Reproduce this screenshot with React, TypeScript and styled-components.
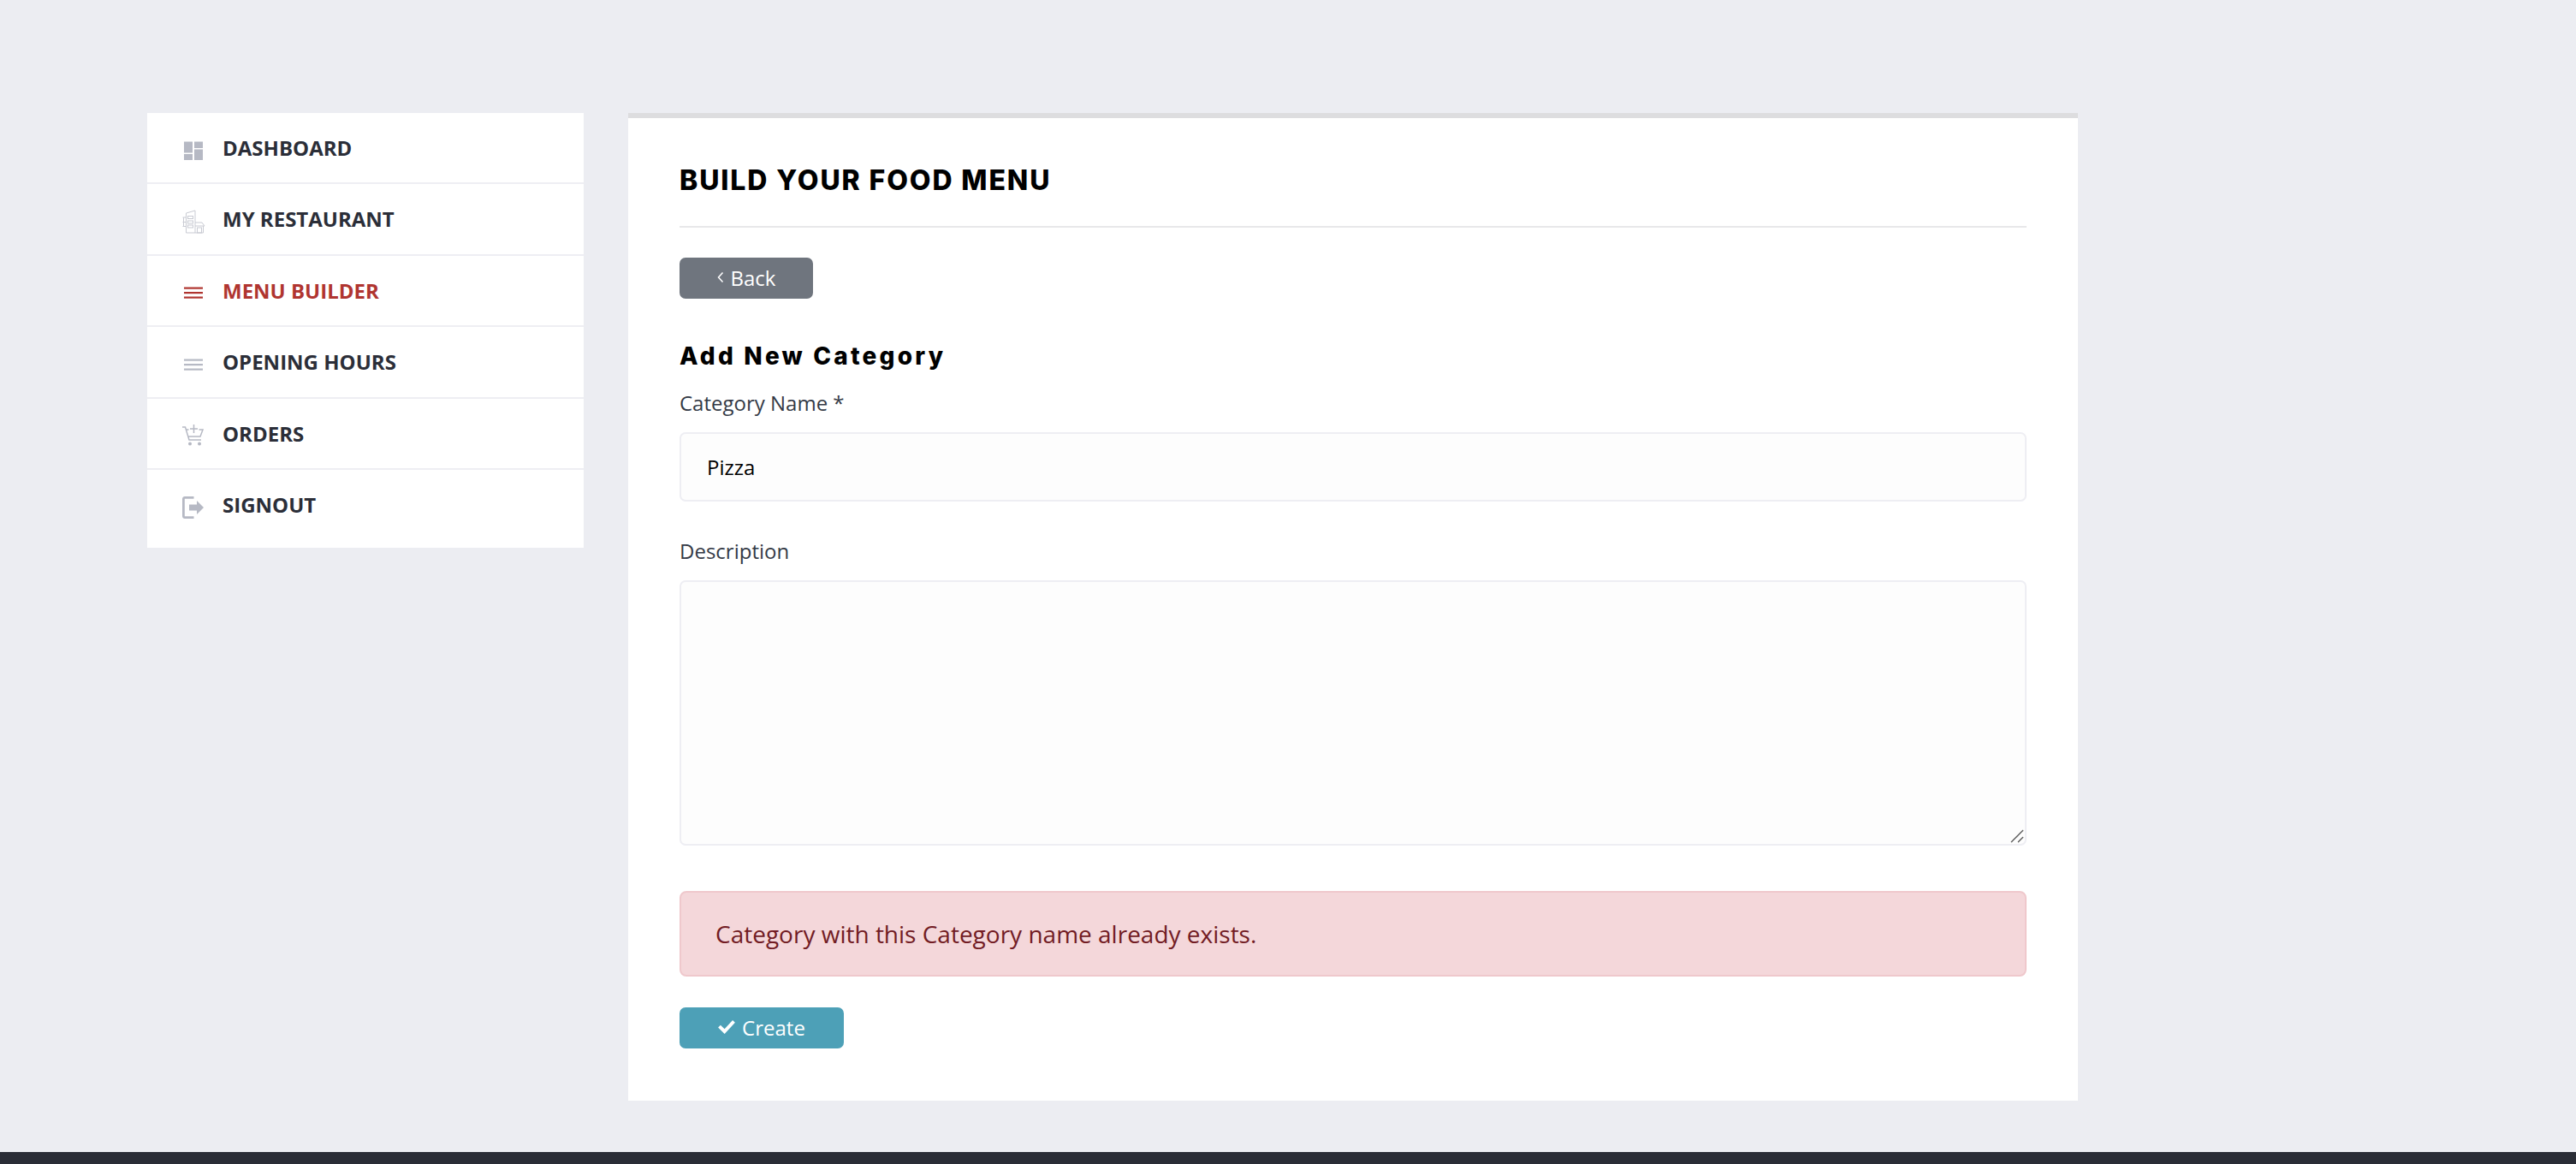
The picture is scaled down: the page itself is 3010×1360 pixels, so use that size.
import { FC, ReactNode } from "react";
import styled, { createGlobalStyle } from "styled-components";

const GlobalStyle = createGlobalStyle`
  html, body {
    margin: 0;
    padding: 0;
    background: #ecedf2;
  }
  * {
    box-sizing: border-box;
  }
`;

const Page = styled.div`
  width: 3010px;
  height: 1360px;
  display: flex;
  flex-direction: column;
  overflow: hidden;
  font-family: "Open Sans", "Liberation Sans", sans-serif;
`;

const Content = styled.div`
  display: flex;
  align-items: flex-start;
  gap: 52px;
  padding: 132px 0 60px 172px;
`;

const Sidebar = styled.nav`
  width: 510px;
  background: #fff;
  padding-bottom: 7.5px;
`;

const NavRow = styled.a<{ $active?: boolean }>`
  display: flex;
  align-items: center;
  height: 83.5px;
  padding-left: 42px;
  border-bottom: 2px solid #eeeef3;
  color: ${(p) => (p.$active ? "#b03530" : "#2b2e38")};
  font-size: 24px;
  font-weight: 700;
  text-transform: uppercase;

  &:first-child {
    height: 83px;
  }

  &:last-child {
    border-bottom-color: transparent;
  }

  svg {
    width: 28px;
    height: 28px;
    margin: 6px 20px 0 -2px;
    flex-shrink: 0;
    color: ${(p) => (p.$active ? "#b03530" : "#b6b9c4")};
  }
`;

const Panel = styled.main`
  width: 1694px;
  height: 1154px;
  background: #fff;
  border-top: 6px solid #dddddf;
  padding: 0 60px;
`;

const PanelHeader = styled.header`
  height: 128px;
  padding-top: 52px;
  border-bottom: 2px solid #e8e8ea;
`;

const Title = styled.h1`
  margin: 0;
  font-family: Inter, "Liberation Sans", sans-serif;
  font-size: 32px;
  line-height: 42px;
  font-weight: 800;
  letter-spacing: 1.9px;
  color: #000;
`;

const Button = styled.button<{ $bg: string; $width: number }>`
  display: flex;
  align-items: center;
  justify-content: center;
  gap: 8px;
  width: ${(p) => p.$width}px;
  height: 48px;
  padding: 0 0 2px;
  border: 0;
  border-radius: 7px;
  background: ${(p) => p.$bg};
  color: #fff;
  font-family: inherit;
  font-size: 24px;

  svg {
    flex-shrink: 0;
  }
`;

const BackRow = styled.div`
  margin-top: 35px;
`;

const SubTitle = styled.h2`
  margin: 48px 0 0;
  font-family: Inter, "Liberation Sans", sans-serif;
  font-size: 28px;
  line-height: 38px;
  font-weight: 800;
  letter-spacing: 3.2px;
  color: #000;
`;

const Field = styled.div<{ $gap: number }>`
  margin-top: ${(p) => p.$gap}px;
`;

const Label = styled.label`
  display: block;
  height: 51px;
  font-size: 24px;
  line-height: 34px;
  color: #343a46;
`;

const TextInput = styled.input`
  display: block;
  width: 100%;
  height: 81px;
  padding: 0 30px;
  border: 2px solid #eeeef3;
  border-radius: 7px;
  background: #fdfdfd;
  color: #000;
  font-family: inherit;
  font-size: 24px;
  outline: none;
`;

const TextAreaWrap = styled.div`
  position: relative;

  svg {
    position: absolute;
    right: 3px;
    bottom: 3px;
  }
`;

const TextArea = styled.textarea`
  display: block;
  width: 100%;
  height: 310px;
  border: 2px solid #eeeef3;
  border-radius: 7px;
  background: #fdfdfd;
  resize: none;
  outline: none;
`;

const Alert = styled.div`
  display: flex;
  align-items: center;
  height: 100px;
  margin-top: 53px;
  padding-left: 40px;
  border: 2px solid #efc8cc;
  border-radius: 8px;
  background: #f4d7da;
  color: #721c24;
  font-size: 28px;
`;

const Actions = styled.div`
  margin-top: 36px;
`;

const Footer = styled.footer`
  flex: 1;
  background: #2a2d36;
`;

const DashboardIcon = () => (
  <svg viewBox="0 0 28 28" fill="currentColor">
    <rect x="3" y="3.5" width="10" height="13" />
    <rect x="15" y="3.5" width="10" height="7.5" />
    <rect x="15" y="12.5" width="10" height="12.5" />
    <rect x="3" y="18" width="10" height="7" />
  </svg>
);

const RestaurantIcon = () => (
  <svg viewBox="0 0 28 28" fill="none" stroke="#c9cbd3" strokeWidth="1">
    <path d="M5.500 27V4l10.500-3v26" />
    <path d="M5.500 27h20V19" />
    <path d="M16 15h8l3 4H16" />
    <rect x="7.500" y="7.500" width="6" height="3" />
    <rect x="7.500" y="13" width="6" height="3" />
    <rect x="7.500" y="18" width="6" height="3" />
    <path d="M1.500 9h4M1.500 14.500h4M1.500 19.500h4M2.500 9v10.500" />
    <rect x="18.500" y="21" width="5" height="6" />
  </svg>
);

const MenuIcon = () => (
  <svg viewBox="0 0 28 28" fill="currentColor">
    <rect x="3" y="7.500" width="22" height="2.200" />
    <rect x="3" y="13" width="22" height="2.200" />
    <rect x="3" y="18.500" width="22" height="2.200" />
  </svg>
);

const CartIcon = () => (
  <svg viewBox="0 0 28 28" fill="none" stroke="currentColor" strokeWidth="1.500">
    <path d="M1 4h3.500l4.500 15h14" />
    <path d="M5.500 7h3M20.500 7H25l-3 8H8" />
    <path d="M14.500 1v10M10 6h9" />
    <circle cx="10" cy="23.500" r="2" fill="currentColor" stroke="none" />
    <circle cx="21" cy="23.500" r="2" fill="currentColor" stroke="none" />
  </svg>
);

const SignoutIcon = () => (
  <svg viewBox="0 0 28 28" fill="currentColor">
    <path d="M1 4c0-1.700 1.300-3 3-3h10.500v2.800H3.800v20.400h10.700V27H4c-1.700 0-3-1.300-3-3z" />
    <path d="M9 10.500h9V6l8 8-8 8v-4.500H9z" />
  </svg>
);

const BackIcon = () => (
  <svg width="8" height="14" viewBox="0 0 8 14" fill="none" stroke="#fff" strokeWidth="1.500">
    <path d="M6.500 1.500L1.500 7l5 5.500" />
  </svg>
);

const CheckIcon = () => (
  <svg width="20" height="16" viewBox="0 0 21 17" fill="#fff">
    <path d="M0 9l3-3 5 5L18 0l3 3L8 17z" />
  </svg>
);

const ResizeGrip = () => (
  <svg width="16" height="16" viewBox="0 0 16 16" fill="none" stroke="#555" strokeWidth="1.400">
    <path d="M1 15L15 1M9 15l6-6" />
  </svg>
);

interface INavItem {
  label: string;
  icon: ReactNode;
  active?: boolean;
}

const navItems: INavItem[] = [
  { label: "Dashboard", icon: <DashboardIcon /> },
  { label: "My Restaurant", icon: <RestaurantIcon /> },
  { label: "Menu Builder", icon: <MenuIcon />, active: true },
  { label: "Opening Hours", icon: <MenuIcon /> },
  { label: "Orders", icon: <CartIcon /> },
  { label: "Signout", icon: <SignoutIcon /> },
];

const App: FC = () => {
  return (
    <Page>
      <GlobalStyle />
      <Content>
        <Sidebar>
          {navItems.map((item) => (
            <NavRow key={item.label} $active={item.active}>
              {item.icon}
              {item.label}
            </NavRow>
          ))}
        </Sidebar>
        <Panel>
          <PanelHeader>
            <Title>BUILD YOUR FOOD MENU</Title>
          </PanelHeader>
          <BackRow>
            <Button $bg="#6f757e" $width={156}>
              <BackIcon />
              Back
            </Button>
          </BackRow>
          <SubTitle>Add New Category</SubTitle>
          <Field $gap={19}>
            <Label htmlFor="category-name">Category Name *</Label>
            <TextInput id="category-name" value="Pizza" readOnly />
          </Field>
          <Field $gap={41}>
            <Label htmlFor="description">Description</Label>
            <TextAreaWrap>
              <TextArea id="description" readOnly />
              <ResizeGrip />
            </TextAreaWrap>
          </Field>
          <Alert>Category with this Category name already exists.</Alert>
          <Actions>
            <Button $bg="#4da0b7" $width={192}>
              <CheckIcon />
              Create
            </Button>
          </Actions>
        </Panel>
      </Content>
      <Footer />
    </Page>
  );
};

export default App;
